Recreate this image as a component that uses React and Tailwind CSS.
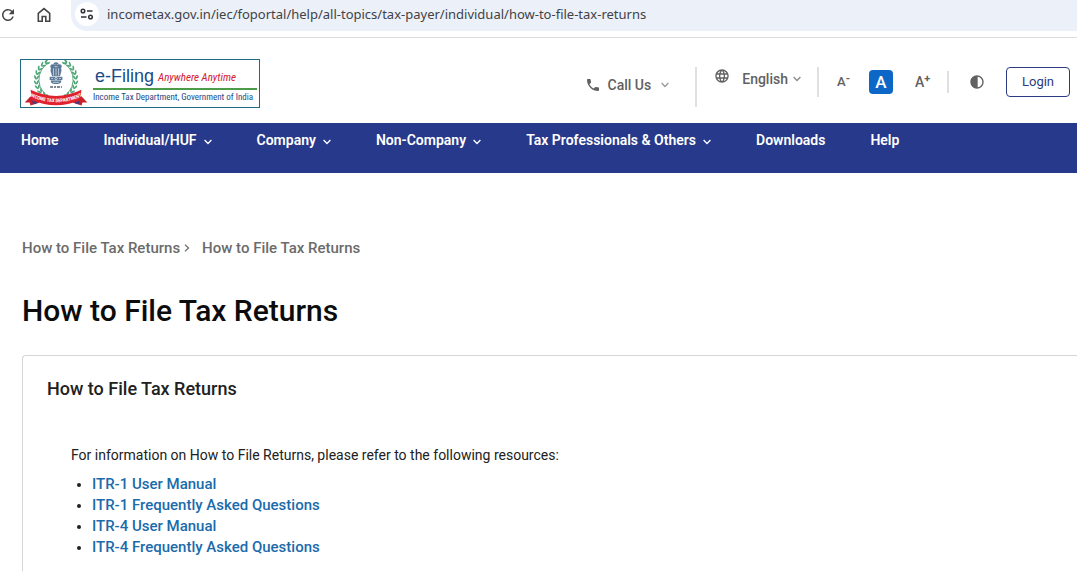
import React, { useState } from 'react';
import { MdPhone, MdLanguage, MdContrast, MdRefresh } from 'react-icons/md';

const NAV_ITEMS = [
  { label: 'Home', menu: false },
  { label: 'Individual/HUF', menu: true },
  { label: 'Company', menu: true },
  { label: 'Non-Company', menu: true },
  { label: 'Tax Professionals & Others', menu: true },
  { label: 'Downloads', menu: false },
  { label: 'Help', menu: false },
];

const RESOURCES = [
  'ITR-1 User Manual',
  'ITR-1 Frequently Asked Questions',
  'ITR-4 User Manual',
  'ITR-4 Frequently Asked Questions',
];

const Chevron = ({ className }) => (
  <svg viewBox="0 0 8 6" className={`h-[6px] w-2 shrink-0 ${className}`} fill="none" stroke="currentColor" strokeWidth="1.3" aria-hidden="true">
    <path d="M.6 1 4 4.5 7.4 1" />
  </svg>
);

// Leaf pairs along both sides of the wreath
const LEAVES = [-140, -126, -112, -98, -84, -70, -56, -42, -28, -14];

const Emblem = () => (
  <svg viewBox="0 0 68 48" className="h-[47px] w-[68px] shrink-0" aria-hidden="true">
    {[1, -1].map((side) => (
      <g key={side} transform={`translate(33 20) scale(${side} 1)`}>
        <path d="M4 19A20 20 0 0 0 6 -18" fill="none" stroke="#3a9a63" strokeWidth=".8" />
        {LEAVES.map((deg) => (
          <g key={deg} transform={`rotate(${deg + 76}) translate(20 0)`} fill="#4aa574">
            <ellipse cx="-1.3" cy="0" rx=".9" ry="2.4" transform="rotate(-28)" />
            <ellipse cx="1.5" cy="0" rx=".9" ry="2.4" transform="rotate(28)" />
          </g>
        ))}
      </g>
    ))}
    {/* Lion capital */}
    <g fill="#5b7896">
      <circle cx="33" cy="5" r="2.8" />
      <circle cx="29.4" cy="6.5" r="2.2" />
      <circle cx="36.6" cy="6.5" r="2.2" />
      <path d="M28 6.500h10l.6 4.500-1.600 5.500h-8l-1.600-5.500z" />
      <path d="M26.500 17.200h13v3.400h-13z" />
      <path d="M28 21h10c1 2-1 3.600-5 3.600s-6-1.600-5-3.600z" />
    </g>
    <g stroke="#e8eff6" strokeWidth=".7" fill="none">
      <path d="M31.400 4.500h1M33.800 4.500h1M31.500 6.800h3M30.400 8.500V16M35.600 8.500V16M33 8.500V16" />
      <circle cx="33" cy="18.900" r="1.200" />
      <path d="M28 18.900h2M36 18.900h2M30 22.800h6" />
    </g>
    <path d="M27 27.500h12" stroke="#555f6c" strokeWidth="1.600" strokeDasharray="3 1 2 1" />
    {/* Ribbon */}
    <path d="M9 35 1 43.500l5-.2 1 3.200 9-3z" fill="#c9202c" />
    <path d="M57 35l8 8.500-5-.2-1 3.200-9-3z" fill="#c9202c" />
    <path d="M8.500 40.500l6 3.500-5 1.500zM57.500 40.500l-6 3.500 5 1.500z" fill="#4b3b7c" />
    <path d="M7 30.500Q33 43 59 30.500L57.500 41Q33 51.500 8.500 41z" fill="#e0222e" />
    <path id="ribbon-line" d="M6 36.800Q33 49.500 60 36.800" fill="none" />
    <text fill="#fff" fontFamily="Liberation Sans Narrow, Roboto Condensed, sans-serif" fontWeight="700" fontSize="5">
      <textPath href="#ribbon-line" startOffset="50%" textAnchor="middle">INCOME TAX DEPARTMENT</textPath>
    </text>
  </svg>
);

const BrowserBar = () => (
  <div className="flex h-[38px] items-start border-b border-[#dcdee1] bg-white">
    <button aria-label="Reload" className="mt-[6px] flex w-4 shrink-0 justify-center text-[#444746]">
      <MdRefresh className="size-[18px] shrink-0" />
    </button>
    <button aria-label="Home page" className="mt-[7px] ml-5 text-[#444746]">
      <svg viewBox="0 0 16 16" className="size-4" fill="none" stroke="currentColor" strokeWidth="1.6">
        <path d="M2.300 6.300 8 1.600l5.700 4.700v7.900H9.800V9.500H6.200v4.700H2.300z" />
      </svg>
    </button>
    <div className="ml-[19px] flex h-[31px] grow items-start rounded-bl-2xl bg-[#ebf0f9]">
      <button aria-label="Site information" className="mt-[2px] ml-1 flex size-6 shrink-0 items-center justify-center rounded-full bg-white text-[#303236]">
        <svg viewBox="0 0 14 12" className="h-3 w-[14px]" fill="none" stroke="currentColor" strokeWidth="1.500">
          <circle cx="3" cy="3" r="1.800" />
          <path d="M7 3h5.500M1 9h5.500" />
          <circle cx="10.500" cy="9" r="1.800" />
        </svg>
      </button>
      <input
        type="text"
        aria-label="Address"
        defaultValue="incometax.gov.in/iec/foportal/help/all-topics/tax-payer/individual/how-to-file-tax-returns"
        className="ml-2 h-7 grow bg-transparent font-['Noto_Sans','Open_Sans',sans-serif] text-[13px] text-[#3f4246] outline-none"
      />
    </div>
  </div>
);

const Logo = () => (
  <a href="#" aria-label="e-Filing home" className="mt-[21px] flex h-[49px] w-60 shrink-0 border border-[#1f6a80] bg-white pl-[2px] font-['Liberation_Sans_Narrow','Roboto_Condensed','Liberation_Sans',sans-serif]">
    <Emblem />
    <div className="ml-[2px] flex grow flex-col">
      <div className="flex h-7 items-center gap-1 pt-1 pl-[2px] whitespace-nowrap">
        <span className="font-['Liberation_Sans',sans-serif] text-[18px] text-[#1c4b86]">e-Filing</span>
        <span className="pt-1 text-[11px] text-[#d3202f] italic">Anywhere Anytime</span>
      </div>
      <div className="mr-[2px] h-[2px] bg-[#4b9b49]" />
      <div className="text-[9px] leading-[14px] whitespace-nowrap text-[#1c4b86]">
        Income Tax Department, Government of India
      </div>
    </div>
  </a>
);

const Header = () => {
  const [textSize, setTextSize] = useState('normal');

  return (
    <header className="flex h-[85px] items-start pr-[7px] pl-5">
      <Logo />
      <div className="mt-[29px] ml-auto flex items-start text-sm font-medium text-[#616161]">
        <button className="flex h-9 items-center">
          <MdPhone className="mr-[7px] size-4" />
          Call Us
          <Chevron className="ml-[10px] text-[#9a9a9a]" />
        </button>
        <div className="ml-[26px] h-10 w-[2px] bg-[#e0e0e0]" />
        <button className="ml-[17px] flex h-6 items-center">
          <MdLanguage className="mr-3 mb-[6px] size-4" />
          English
          <Chevron className="ml-[5px] text-[#8a8a8a]" />
        </button>
        <div className="ml-4 h-[30px] w-[2px] bg-[#e0e0e0]" />
        <div className="flex h-[30px] items-center">
          <button aria-label="Decrease text size" onClick={() => setTextSize('small')} className="ml-[18px] flex w-3 items-center text-[13px]">
            A<span className="mb-[7px] text-[11px] font-bold">-</span>
          </button>
          <button
            aria-label="Normal text size"
            aria-pressed={textSize === 'normal'}
            onClick={() => setTextSize('normal')}
            className="ml-5 size-6 rounded-sm bg-[#0d67c6] text-[17px] leading-6 text-white"
          >
            A
          </button>
          <button aria-label="Increase text size" onClick={() => setTextSize('large')} className="ml-[22px] flex w-4 items-center text-sm">
            A<span className="mb-[7px] text-[11px] font-bold">+</span>
          </button>
          <div className="ml-4 h-[22px] w-[2px] bg-[#e0e0e0]" />
          <button aria-label="Contrast" className="ml-5">
            <MdContrast className="size-4" />
          </button>
          <button className="ml-[21px] h-[30px] w-16 rounded-sm border border-[#2c3a82] text-[13px] font-normal text-[#2c3a82]">
            Login
          </button>
        </div>
      </div>
    </header>
  );
};

const MainNav = () => (
  <nav className="flex h-[50px] items-start gap-[45px] bg-[#27398a] pt-[7px] pl-[21px] text-sm font-semibold whitespace-nowrap text-white">
    {NAV_ITEMS.map((item) => (
      <a key={item.label} href="#" className="flex items-center">
        {item.label}
        {item.menu && <Chevron className="mt-1 ml-[7px]" />}
      </a>
    ))}
  </nav>
);

const App = () => {
  return (
    <div className="flex min-h-screen flex-col bg-white font-['Roboto',sans-serif]">
      <BrowserBar />
      <Header />
      <MainNav />
      <main className="flex grow flex-col pt-[65px] pl-[22px]">
        <div className="flex items-center text-[15px] leading-5 font-medium text-[#6b6b6b]">
          <a href="#">How to File Tax Returns</a>
          <svg viewBox="0 0 6 8" className="mx-1 h-2 w-[6px]" fill="none" stroke="currentColor" strokeWidth="1.3" aria-hidden="true">
            <path d="M1 .6 4.500 4 1 7.400" />
          </svg>
          <span className="ml-2">How to File Tax Returns</span>
        </div>
        <h1 className="mt-[33px] text-[30px] leading-10 font-medium text-[#0c0c0c]">How to File Tax Returns</h1>
        <section className="mt-6 grow rounded-tl-sm border-t border-l border-[#d6d6d6] px-6 pt-[19px]">
          <h2 className="text-lg leading-7 font-medium text-[#212121]">How to File Tax Returns</h2>
          <div className="mt-10 ml-6 text-sm text-[#212121]">
            <p className="leading-6">For information on How to File Returns, please refer to the following resources:</p>
            <ul className="mt-[7px] list-disc pl-[21px] leading-[21px]">
              {RESOURCES.map((name) => (
                <li key={name}>
                  <a href="#" className="text-[15px] font-medium text-[#1a6bab]">{name}</a>
                </li>
              ))}
            </ul>
          </div>
        </section>
      </main>
    </div>
  );
};

export default App;
